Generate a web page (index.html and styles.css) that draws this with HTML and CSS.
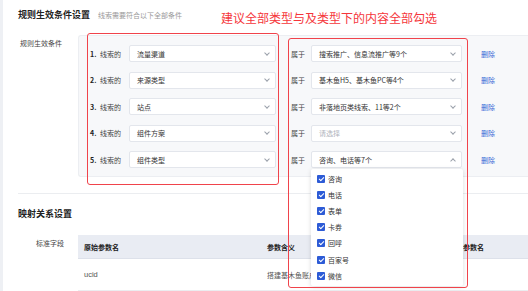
FILE: index.html
```html
<!DOCTYPE html>
<html lang="zh">
<head>
    <meta charset="UTF-8">
    <title>规则生效条件设置</title>
    <link rel="stylesheet" href="styles.css">
</head>
<body>
    <div class="page">
        <div class="section-head">
            <h2 class="section-title">规则生效条件设置</h2>
            <span class="section-sub">线索需要符合以下全部条件</span>
        </div>

        <div class="form-line">
            <div class="form-label">规则生效条件</div>
            <div class="cond-box">
                <div class="cond-row">
                    <span class="cond-no">1.</span>
                    <span class="cond-text">线索的</span>
                    <div class="select select-type"><span>流量渠道</span><i class="chev"></i></div>
                    <span class="cond-in">属于</span>
                    <div class="select select-value"><span>搜索推广、信息流推广等9个</span><i class="chev"></i></div>
                    <a class="del">删除</a>
                </div>
                <div class="cond-row">
                    <span class="cond-no">2.</span>
                    <span class="cond-text">线索的</span>
                    <div class="select select-type"><span>来源类型</span><i class="chev"></i></div>
                    <span class="cond-in">属于</span>
                    <div class="select select-value"><span>基木鱼H5、基木鱼PC等4个</span><i class="chev"></i></div>
                    <a class="del">删除</a>
                </div>
                <div class="cond-row">
                    <span class="cond-no">3.</span>
                    <span class="cond-text">线索的</span>
                    <div class="select select-type"><span>站点</span><i class="chev"></i></div>
                    <span class="cond-in">属于</span>
                    <div class="select select-value"><span>非落地页类线索、11等2个</span><i class="chev"></i></div>
                    <a class="del">删除</a>
                </div>
                <div class="cond-row">
                    <span class="cond-no">4.</span>
                    <span class="cond-text">线索的</span>
                    <div class="select select-type"><span>组件方案</span><i class="chev"></i></div>
                    <span class="cond-in">属于</span>
                    <div class="select select-value"><span class="placeholder">请选择</span><i class="chev"></i></div>
                    <a class="del">删除</a>
                </div>
                <div class="cond-row">
                    <span class="cond-no">5.</span>
                    <span class="cond-text">线索的</span>
                    <div class="select select-type"><span>组件类型</span><i class="chev"></i></div>
                    <span class="cond-in">属于</span>
                    <div class="select select-value is-open">
                        <span>咨询、电话等7个</span><i class="chev up"></i>
                        <ul class="dropdown">
                            <li><i class="check"></i>咨询</li>
                            <li><i class="check"></i>电话</li>
                            <li><i class="check"></i>表单</li>
                            <li><i class="check"></i>卡券</li>
                            <li><i class="check"></i>回呼</li>
                            <li><i class="check"></i>百家号</li>
                            <li><i class="check"></i>微信</li>
                        </ul>
                    </div>
                    <a class="del">删除</a>
                </div>
            </div>
        </div>

        <div class="divider"></div>

        <h2 class="section-title map-title">映射关系设置</h2>

        <div class="form-line">
            <div class="form-label align-right">标准字段</div>
            <div class="map-table">
                <div class="map-head">
                    <div class="cell c1">原始参数名</div>
                    <div class="cell c2">参数含义</div>
                    <div class="cell c3">目标参数名</div>
                </div>
                <div class="map-row">
                    <div class="cell c1 latin">ucid</div>
                    <div class="cell c2">搭建基木鱼账户ID</div>
                    <div class="cell c3 latin">ucid</div>
                </div>
            </div>
        </div>

        <div class="note">建议全部类型与及类型下的内容全部勾选</div>
        <div class="mark mark-type"></div>
        <div class="mark mark-value"></div>
    </div>
</body>
</html>
```

FILE: styles.css
```css
* {
    margin: 0;
    padding: 0;
    box-sizing: border-box;
}

body {
    width: 528px;
    height: 291px;
    overflow: hidden;
    font-family: "Noto Sans CJK SC", "Noto Sans", sans-serif;
    color: #333;
    background: linear-gradient(to right, #eef0f4 3px, #ffffff 3px);
}

.page {
    position: relative;
    width: 528px;
    padding-left: 18px;
}

.section-head {
    height: 30px;
    display: flex;
    align-items: center;
    gap: 8px;
}

.section-title {
    font-size: 9px;
    font-weight: 700;
    color: #222;
    line-height: 12px;
}

.section-sub {
    font-size: 7px;
    color: #999;
}

.form-line {
    display: flex;
    margin-top: 5px;
}

.form-label {
    width: 60px;
    flex-shrink: 0;
    padding: 3px 0 0 2px;
    font-size: 7px;
    line-height: 10px;
    color: #444;
}

.form-label.align-right {
    text-align: right;
    padding: 3px 14px 0 0;
}

.cond-box {
    flex: 1;
    background: #f7f8fa;
    border: 1px solid #eceef2;
    border-right: none;
    border-radius: 3px 0 0 3px;
    padding: 9px 0 8px 11px;
    display: flex;
    flex-direction: column;
    gap: 9.5px;
}

.cond-row {
    height: 17px;
    display: flex;
    align-items: center;
    font-size: 7px;
}

.cond-no {
    width: 10px;
    font-weight: 700;
    color: #222;
}

.cond-text {
    width: 29px;
    color: #444;
}

.cond-in {
    width: 20px;
    color: #444;
}

.select {
    position: relative;
    height: 17px;
    background: #fff;
    border: 1px solid #e3e6ec;
    border-radius: 2px;
    display: flex;
    align-items: center;
    justify-content: space-between;
    padding: 0 6px 0 7px;
    color: #333;
}

.select-type {
    width: 147px;
    margin-right: 15px;
}

.select-value {
    width: 151px;
    margin-right: 19px;
}

.placeholder {
    color: #b0b4bc;
}

.chev {
    width: 4px;
    height: 4px;
    border-right: 1px solid #9aa0aa;
    border-bottom: 1px solid #9aa0aa;
    transform: translateY(-1px) rotate(45deg);
}

.chev.up {
    transform: translateY(1px) rotate(-135deg);
}

.del {
    color: #3566d6;
}

.dropdown {
    position: absolute;
    top: 17px;
    left: -1px;
    width: 152px;
    list-style: none;
    background: #fff;
    border-radius: 2px;
    box-shadow: 0 1px 5px rgba(0, 0, 0, 0.14);
    padding: 1.5px 0 2px;
    z-index: 5;
}

.dropdown li {
    height: 16.2px;
    display: flex;
    align-items: center;
    gap: 3px;
    padding-left: 6px;
    font-size: 7px;
    color: #333;
}

.check {
    position: relative;
    width: 8px;
    height: 8px;
    border-radius: 1px;
    background: #2d5bd6;
}

.check::after {
    content: '';
    position: absolute;
    left: 2.6px;
    top: 1px;
    width: 2px;
    height: 4px;
    border-right: 1px solid #fff;
    border-bottom: 1px solid #fff;
    transform: rotate(45deg);
}

.divider {
    margin-top: 16px;
    border-top: 1px solid #ebedf0;
}

.map-title {
    margin-top: 14px;
}

.map-title + .form-line {
    margin-top: 15px;
}

.map-table {
    flex: 1;
    font-size: 7px;
}

.map-head,
.map-row {
    display: flex;
    align-items: center;
}

.map-head {
    height: 24px;
    background: #e9ecf3;
    border-bottom: 1px solid #dde1ea;
    font-weight: 600;
    color: #222;
}

.map-row {
    height: 32px;
    border-bottom: 1px solid #ebedf0;
    color: #555;
}

.cell {
    padding-left: 6px;
    white-space: nowrap;
}

.cell.latin {
    font-family: "Liberation Sans", sans-serif;
    font-size: 7.5px;
    color: #555;
}

.c1 {
    width: 183px;
}

.c2 {
    width: 182px;
}

.note {
    position: absolute;
    left: 221px;
    top: 9px;
    font-size: 12px;
    line-height: 18px;
    color: #f5363b;
    white-space: nowrap;
}

.mark {
    position: absolute;
    border: 1.5px solid #f0434b;
    border-radius: 3px;
    z-index: 6;
}

.mark-type {
    left: 87px;
    top: 33px;
    width: 192px;
    height: 152px;
}

.mark-value {
    left: 288px;
    top: 38px;
    width: 180px;
    height: 250px;
}
```
